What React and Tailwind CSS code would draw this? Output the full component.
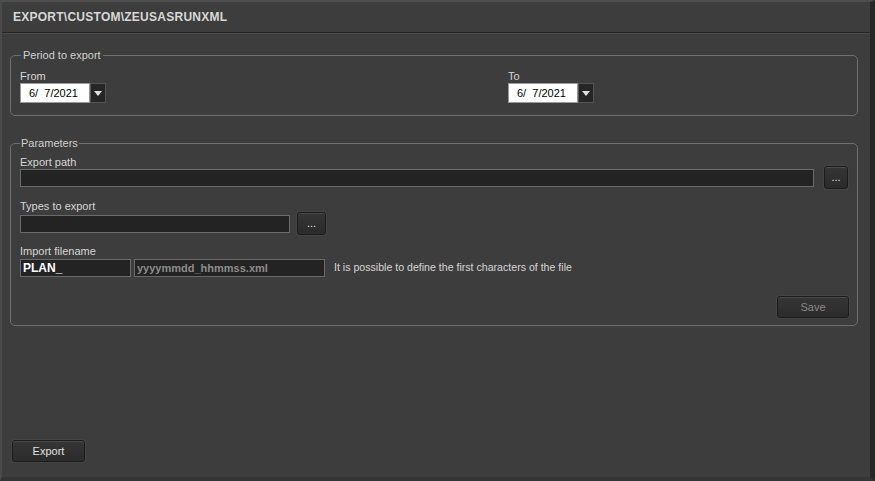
import React from "react";

const font = { fontFamily: '"Liberation Sans", Arial, sans-serif' };

function DateBox() {
  return (
    <div className="flex h-[20px]">
      <div className="w-[70px] h-[20px] bg-white border border-[#9a9a9a] text-black text-[11px] leading-[18px] pl-[8px]">
        6/&nbsp;&nbsp;7/2021
      </div>
      <div className="w-[16px] h-[20px] bg-[#262626] border border-[#555] flex items-center justify-center">
        <svg width="8" height="5" viewBox="0 0 8 5"><path d="M0 0H8L4 5Z" fill="#e0e0e0" /></svg>
      </div>
    </div>
  );
}

function Btn({ children, className = "", disabled }) {
  return (
    <div
      className={`flex items-center justify-center rounded-[3px] border border-[#1c1c1c] bg-gradient-to-b from-[#353535] to-[#2b2b2b] shadow-[inset_0_1px_0_#4a4a4a,0_0_0_1px_#444] text-[11px] ${disabled ? "text-[#8a8a8a]" : "text-[#e0e0e0]"} ${className}`}
    >
      {children}
    </div>
  );
}

function Field({ className = "", children }) {
  return (
    <div className={`h-[18px] bg-[#232323] border border-[#6a6a6a] ${className}`}>{children}</div>
  );
}

export default function App() {
  return (
    <div
      style={font}
      className="w-[875px] h-[481px] bg-[#3d3d3d] text-[#d6d6d6] flex flex-col border-t-2 border-l-2 border-t-[#4e4e4e] border-l-[#4a4a4a] border-r-[5px] border-r-[#262626] border-b-[4px] border-b-[#353535]"
    >
      <div className="h-[31px] shrink-0 flex items-center pl-[11px] border-b border-b-[#262626] font-bold text-[12px] tracking-[0.25px] text-[#d8d8d8]">
        EXPORT\CUSTOM\ZEUSASRUNXML
      </div>
      <div className="h-px bg-[#4a4a4a] shrink-0" />
      <div className="flex-1 flex flex-col pl-[8px] pr-[12px]">
        <fieldset className="mt-[15px] border border-[#6e6e6e] rounded-[5px] px-[9px] pt-[8px] pb-[12px]">
          <legend className="text-[11px] leading-[13px] px-[2px] ml-[1px] text-[#d0d0d0]">Period to export</legend>
          <div className="grid grid-cols-[488px_1fr]">
            <div>
              <div className="text-[11px] leading-[13px]">From</div>
              <DateBox />
            </div>
            <div>
              <div className="text-[11px] leading-[13px]">To</div>
              <DateBox />
            </div>
          </div>
        </fieldset>

        <fieldset className="mt-[21px] border border-[#6e6e6e] rounded-[5px] px-[9px] pt-[6px] pb-[7px]">
          <legend className="text-[11px] leading-[13px] px-[1px] text-[#d0d0d0]">Parameters</legend>
          <div className="text-[11px] leading-[13px]">Export path</div>
          <div className="flex items-center gap-[10px] mt-[-3px]">
            <Field className="flex-1" />
            <Btn className="w-[24px] h-[23px]">...</Btn>
          </div>
          <div className="text-[11px] leading-[13px] mt-[11px]">Types to export</div>
          <div className="flex items-center gap-[7px] mt-[-1px]">
            <Field className="w-[270px]" />
            <Btn className="w-[29px] h-[23px]">...</Btn>
          </div>
          <div className="text-[11px] leading-[13px] mt-[10px]">Import filename</div>
          <div className="flex items-center mt-[1px]">
            <Field className="w-[111px] text-white font-bold text-[12px] leading-[16px] pl-[2px]">PLAN_</Field>
            <Field className="w-[191px] ml-[3px] text-[#8c8c8c] font-bold text-[11px] leading-[16px] pl-[2px]">yyyymmdd_hhmmss.xml</Field>
            <span className="ml-[9px] text-[10.6px]">It is possible to define the first characters of the file</span>
          </div>
          <div className="flex justify-end mt-[19px]">
            <Btn disabled className="w-[72px] h-[22px] mr-[-1px]">Save</Btn>
          </div>
        </fieldset>
        <div className="flex-1" />
        <div className="pb-[15px] pl-[2px]">
          <Btn className="w-[73px] h-[22px]">Export</Btn>
        </div>
      </div>
    </div>
  );
}
